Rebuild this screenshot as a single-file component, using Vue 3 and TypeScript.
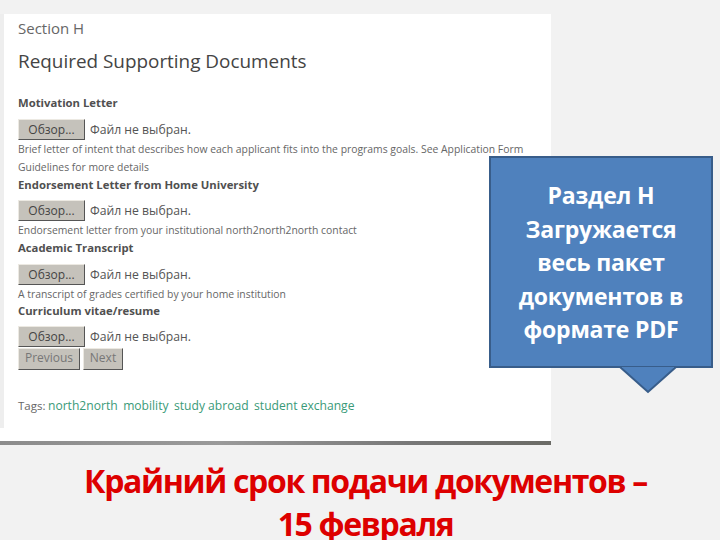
<script setup lang="ts">
interface Doc { title: string; hint: string[]; status: string }
const docs: Doc[] = [
  { title: 'Motivation Letter', hint: ['Brief letter of intent that describes how each applicant fits into the programs goals. See Application Form', 'Guidelines for more details'], status: 'Файл не выбран.' },
  { title: 'Endorsement Letter from Home University', hint: ['Endorsement letter from your institutional north2north2north contact'], status: 'Файл не выбран.' },
  { title: 'Academic Transcript', hint: ['A transcript of grades certified by your home institution'], status: 'Файл не выбран.' },
  { title: 'Curriculum vitae/resume', hint: [], status: 'Файл не выбран.' },
]
const tags = ['north2north', 'mobility', 'study abroad', 'student exchange']
</script>

<template>
  <div class="slide">
    <section class="panel">
      <p class="section">Section H</p>
      <h1 class="heading">Required Supporting Documents</h1>
      <div class="docs">
        <div v-for="d in docs" :key="d.title" class="doc">
          <div class="doc-title">{{ d.title }}</div>
          <div class="file">
            <button class="browse" type="button">Обзор...</button>
            <span class="status">{{ d.status }}</span>
          </div>
          <div v-for="h in d.hint" :key="h" class="hint">{{ h }}</div>
        </div>
      </div>
      <div class="nav">
        <button class="navbtn prev" type="button">Previous</button>
        <button class="navbtn next" type="button">Next</button>
      </div>
      <div class="tags">
        <span>Tags:</span>
        <a v-for="t in tags" :key="t" class="tag">{{ t }}</a>
      </div>
    </section>
    <div class="rule"></div>
    <footer class="deadline">
      <span>Крайний срок подачи документов –</span>
      <span>15 февраля</span>
    </footer>
    <aside class="callout">
      <div class="callout-box">Раздел Н<br />Загружается<br />весь пакет<br />документов в<br />формате PDF</div>
      <svg class="arrow" width="60" height="27" viewBox="0 0 60 27">
        <path d="M1 0 L29 25 L57 0 Z" fill="#4f81bd" stroke="#385d8a" stroke-width="2" />
        <path d="M3 0 H55" stroke="#4f81bd" stroke-width="2" />
      </svg>
    </aside>
  </div>
</template>

<style>
html, body { margin: 0; padding: 0; background: #f2f2f2; }
</style>

<style scoped>
.slide {
  position: relative;
  width: 720px;
  height: 540px;
  overflow: hidden;
  background: #f2f2f2;
  font-family: "Open Sans", "Noto Sans", sans-serif;
}
.panel {
  position: relative;
  box-sizing: border-box;
  width: 551px;
  height: 427px;
  margin-top: 14px;
  padding: 0 0 0 18px;
  background: #fff;
  color: #555;
}
.panel::before {
  content: "";
  position: absolute;
  left: 0;
  top: 0;
  bottom: 13px;
  width: 4px;
  background: #eeeeee;
}
.section {
  margin: 0;
  padding-top: 5px;
  height: 20px;
  line-height: 18px;
  font-size: 15px;
  color: #666;
}
.heading {
  margin: 11px 0 0;
  height: 22px;
  line-height: 22px;
  font-size: 18.9px;
  font-weight: 400;
  color: #444;
}
.docs { margin-top: 22px; }
.doc { margin-bottom: 1px; }
.doc:first-child, .doc:last-child { margin-bottom: 0; }
.doc-title {
  height: 18px;
  line-height: 18px;
  font-size: 11.3px;
  font-weight: 700;
  color: #505050;
}
.file {
  display: flex;
  align-items: center;
  gap: 5px;
  height: 21px;
  margin-top: 6px;
}
.doc:first-child .file, .doc:nth-child(3) .file { margin-top: 7px; }
.browse {
  box-sizing: border-box;
  width: 67px;
  height: 21px;
  padding: 0;
  border: 1px solid;
  border-color: #ece9e2 #555 #555 #ece9e2;
  background: #c5c2bb;
  font: 12px "Open Sans", sans-serif;
  color: #444;
}
.status { font-size: 12.2px; color: #555; }
.hint {
  height: 18px;
  line-height: 18px;
  font-size: 10.38px;
  color: #666;
  white-space: nowrap;
}
.doc:nth-child(2) .hint { height: 17px; }
.doc:nth-child(3) .hint { height: 16px; }
.nav { display: flex; gap: 3px; margin-top: 1px; }
.navbtn {
  box-sizing: border-box;
  height: 22px;
  padding: 0 0 3px;
  border: 1px solid;
  border-color: #ece9e2 #555 #555 #ece9e2;
  background: #c5c2bb;
  font: 12px "Open Sans", sans-serif;
  color: #777;
}
.prev { width: 62px; }
.next { width: 40px; }
.tags {
  display: flex;
  gap: 5.5px;
  margin-top: 27px;
  height: 18px;
  line-height: 18px;
  font-size: 12.1px;
  color: #666;
}
.tags span { margin-right: -3px; font-size: 11.5px; }
.tag { color: #3a9a78; }
.rule {
  width: 551px;
  height: 4px;
  background: linear-gradient(90deg, #8c8c8c, #9a9a9a 40%, #777 75%, #6b6b66);
}
.deadline {
  display: flex;
  flex-direction: column;
  align-items: center;
  gap: 10px;
  margin-top: 19px;
  padding-left: 11px;
  font-size: 32px;
  line-height: 33px;
  font-weight: 700;
  color: #dd0000;
  letter-spacing: -1.35px;
}
.callout {
  position: absolute;
  left: 489px;
  top: 156px;
  width: 224px;
}
.callout-box {
  box-sizing: border-box;
  height: 212px;
  padding-top: 21px;
  border: 2px solid #385d8a;
  background: #4f81bd;
  color: #fff;
  text-align: center;
  font-size: 23px;
  line-height: 33.5px;
  font-weight: 700;
  letter-spacing: -0.2px;
}
.arrow {
  position: absolute;
  left: 130px;
  top: 211px;
  display: block;
}
</style>
